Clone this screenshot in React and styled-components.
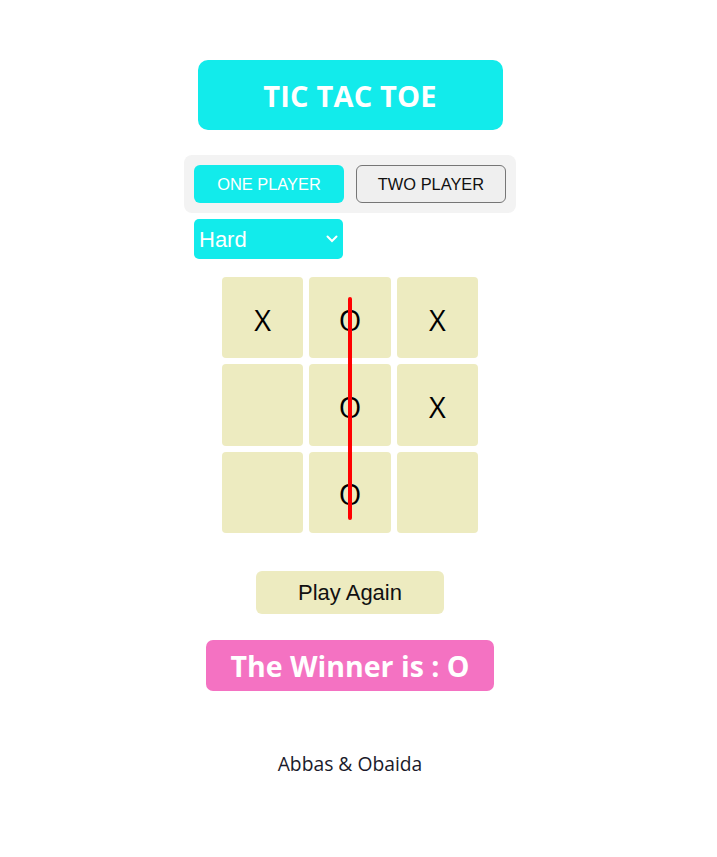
import React, { useState } from 'react';
import styled, { createGlobalStyle } from 'styled-components';

const GlobalStyle = createGlobalStyle`
  body {
    margin: 0;
    background: #ffffff;
    font-family: "Open Sans", "Noto Sans", sans-serif;
  }
`;

const Page = styled.div`
  width: 700px;
  display: flex;
  flex-direction: column;
  align-items: center;
  padding-top: 60px;
`;

const Title = styled.h1`
  margin: 0;
  width: 305px;
  height: 70px;
  display: flex;
  align-items: center;
  justify-content: center;
  background-color: #12ebeb;
  border-radius: 10px;
  color: white;
  font-size: 29px;
  font-weight: 700;
  letter-spacing: 0.2px;
`;

const Controls = styled.div`
  margin-top: 25px;
  width: 332px;
  display: flex;
  flex-direction: column;
`;

const ModePanel = styled.div`
  display: flex;
  gap: 12px;
  padding: 10px;
  background-color: #f3f3f3;
  border-radius: 8px;
`;

const ModeButton = styled.button`
  width: 150px;
  height: 38px;
  border-radius: 6px;
  font-family: "Liberation Sans", Arial, sans-serif;
  font-size: 16.4px;
  cursor: pointer;
  border: ${({ $active }) => ($active ? 'none' : '1px solid #767676')};
  background-color: ${({ $active }) => ($active ? '#12ebeb' : '#efefef')};
  color: ${({ $active }) => ($active ? 'white' : '#111')};
`;

const SelectWrap = styled.div`
  position: relative;
  margin: 6px 0 0 10px;
  width: 149px;
  height: 40px;
`;

const Select = styled.select`
  appearance: none;
  width: 100%;
  height: 100%;
  border: none;
  border-radius: 5px;
  background-color: #12ebeb;
  color: white;
  font-family: "Liberation Sans", Arial, sans-serif;
  font-size: 22px;
  padding: 0 0 0 5px;
  outline: none;
`;

const Chevron = styled.svg`
  position: absolute;
  right: 5px;
  top: 16px;
  pointer-events: none;
`;

const Board = styled.div`
  position: relative;
  margin-top: 18px;
  width: 256px;
  height: 256px;
  display: grid;
  grid-template-columns: repeat(3, 1fr);
  grid-template-rows: repeat(3, 1fr);
  gap: 6px;
`;

const Cell = styled.div`
  background-color: #edebc0;
  border-radius: 4px;
  display: flex;
  align-items: center;
  justify-content: center;
  font-family: "Open Sans", "Noto Sans", sans-serif;
  font-size: 29px;
  color: #000;
  padding-top: 3px;
  box-sizing: border-box;
`;

const WinLine = styled.div`
  position: absolute;
  left: 126px;
  top: 20px;
  width: 4px;
  height: 223px;
  background-color: #ff0000;
  border-radius: 2px;
`;

const PlayAgain = styled.button`
  margin-top: 38px;
  width: 188px;
  height: 43px;
  border: none;
  border-radius: 6px;
  background-color: #edebc0;
  color: #111;
  font-family: "Liberation Sans", Arial, sans-serif;
  font-size: 22px;
  cursor: pointer;
`;

const Winner = styled.div`
  margin-top: 26px;
  width: 288px;
  height: 51px;
  display: flex;
  align-items: center;
  justify-content: center;
  background-color: #f472c2;
  border-radius: 7px;
  color: white;
  font-size: 28.5px;
  font-weight: 700;
`;

const Footer = styled.p`
  margin: 59px 0 0;
  font-size: 19.3px;
  color: #1a1a2a;
`;

const board = ['X', 'O', 'X', '', 'O', 'X', '', 'O', ''];

const App = () => {
  const [mode, setMode] = useState('one');
  const [level, setLevel] = useState('hard');

  return (
    <>
      <GlobalStyle />
      <Page>
        <Title>TIC TAC TOE</Title>
        <Controls>
          <ModePanel>
            <ModeButton $active={mode === 'one'} onClick={() => setMode('one')}>
              ONE PLAYER
            </ModeButton>
            <ModeButton $active={mode === 'two'} onClick={() => setMode('two')}>
              TWO PLAYER
            </ModeButton>
          </ModePanel>
          <SelectWrap>
            <Select value={level} onChange={(e) => setLevel(e.target.value)}>
              <option value="easy">Easy</option>
              <option value="medium">Medium</option>
              <option value="hard">Hard</option>
            </Select>
            <Chevron width="12" height="8" viewBox="0 0 12 8">
              <path d="M1.5 1.5 L6 6 L10.5 1.5" fill="none" stroke="white" strokeWidth="2" strokeLinecap="round" />
            </Chevron>
          </SelectWrap>
        </Controls>
        <Board>
          {board.map((v, i) => (
            <Cell key={i}>{v}</Cell>
          ))}
          <WinLine />
        </Board>
        <PlayAgain>Play Again</PlayAgain>
        <Winner>The Winner is : O</Winner>
        <Footer>Abbas &amp; Obaida</Footer>
      </Page>
    </>
  );
};

export default App;
